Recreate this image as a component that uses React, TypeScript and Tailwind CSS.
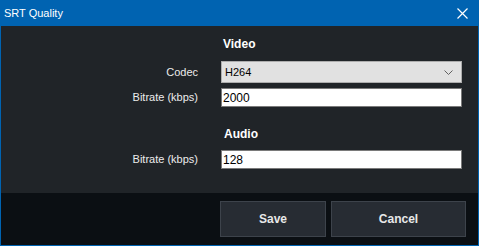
export default function App() {
  const font = { fontFamily: '"Liberation Sans", Arial, sans-serif' };
  return (
    <div
      className="w-[479px] h-[246px] flex flex-col border border-t-0 border-[#0063b1] bg-[#202428] text-white"
      style={font}
    >
      <div className="h-[26px] bg-[#0063b1] flex items-center justify-between pl-[4px] pr-[10px] -mx-px">
        <span className="text-[11px] leading-none">SRT Quality</span>
        <svg width="11" height="11" viewBox="0 0 11 11" className="mr-[1px]">
          <path d="M0.5 0.5 L10.5 10.5 M10.5 0.5 L0.5 10.5" stroke="white" strokeWidth="1.2" />
        </svg>
      </div>

      <div className="flex-1 flex flex-col pt-[10px] text-[11px]">
        <div className="grid grid-cols-[197px_241px] gap-x-[23px] items-center">
          <div />
          <div className="font-bold text-[12px] leading-[16px] pl-[2px]">Video</div>

          <div className="text-right mt-[9px] text-[#ececec]">Codec</div>
          <div className="mt-[9px] h-[22px] bg-[#e1e1e1] border border-[#adadad] flex items-center justify-between pl-[3px] pr-[8px] text-black">
            <span>H264</span>
            <svg width="9" height="5" viewBox="0 0 9 5">
              <path d="M0.5 0.5 L4.5 4.5 L8.5 0.5" stroke="#606060" fill="none" strokeWidth="1" />
            </svg>
          </div>

          <div className="text-right mt-[5px] text-[#ececec]">Bitrate (kbps)</div>
          <div className="mt-[5px] h-[19px] bg-white border border-[#7a7a7a] flex items-center pl-[1px] text-[12px] text-black">
            2000
          </div>

          <div />
          <div className="font-bold text-[12px] leading-[16px] pl-[3px] mt-[19px]">Audio</div>

          <div className="text-right mt-[8px] text-[#ececec]">Bitrate (kbps)</div>
          <div className="mt-[8px] h-[19px] bg-white border border-[#7a7a7a] flex items-center pl-[1px] text-[12px] text-black">
            128
          </div>
        </div>
      </div>

      <div className="h-[52px] bg-[#0b0f13] flex justify-end items-start pt-[8px] pr-[12px] gap-[5px]">
        <button className="w-[106px] h-[36px] bg-[#272c33] border border-[#3d434b] text-[12px] font-bold text-[#e8e8e8]">
          Save
        </button>
        <button className="w-[135px] h-[36px] bg-[#272c33] border border-[#3d434b] text-[12px] font-bold text-[#e8e8e8]">
          Cancel
        </button>
      </div>
    </div>
  );
}
